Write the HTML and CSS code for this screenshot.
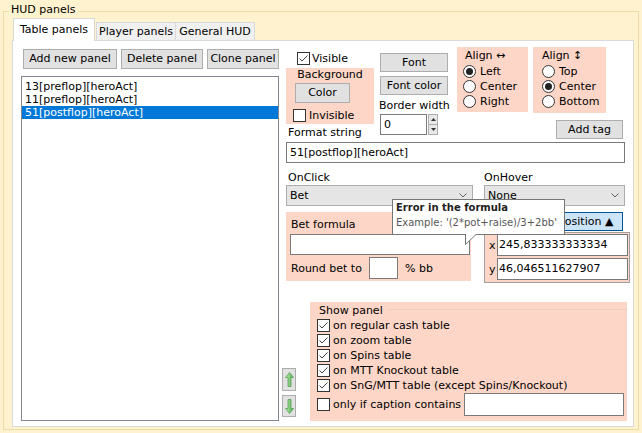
FILE: index.html
```html
<!DOCTYPE html>
<html>
<head>
<meta charset="utf-8">
<link rel="stylesheet" href="styles.css">
</head>
<body>
<div class="group">
  <div class="legend">HUD panels</div>
  <div class="tabs">
    <div class="tab active">Table panels</div>
    <div class="tab tp">Player panels</div>
    <div class="tab tg">General HUD</div>
  </div>
  <div class="page">
    <div class="left">
      <div class="btnrow">
        <div class="btn w1">Add new panel</div>
        <div class="btn w2">Delete panel</div>
        <div class="btn w3">Clone panel</div>
      </div>
      <div class="list">
        <div class="item">13[preflop][heroAct]</div>
        <div class="item">11[preflop][heroAct]</div>
        <div class="item sel">51[postflop][heroAct]</div>
      </div>
    </div>
    <div class="right">
      <div class="top">
        <div class="colA">
          <div class="chk visible"><svg class="cb" width="13" height="13" viewBox="0 0 13 13"><rect x=".5" y=".5" width="12" height="12" fill="#fff" stroke="#333"/><path d="M2.5 6.5l2.5 2.5 5.5-5.5" fill="none" stroke="#444"/></svg><span>Visible</span></div>
          <div class="bgbox pink">
            <div class="bgtitle">Background</div>
            <div class="btn colorbtn">Color</div>
            <div class="chk invis"><svg class="cb" width="13" height="13" viewBox="0 0 13 13"><rect x=".5" y=".5" width="12" height="12" fill="#fff" stroke="#333"/></svg><span>Invisible</span></div>
          </div>
          <div class="fmtlabel">Format string</div>
        </div>
        <div class="colB">
          <div class="btn fontbtn">Font</div>
          <div class="btn fontcolor">Font color</div>
          <div class="bwlabel">Border width</div>
          <div class="spin">
            <div class="inp spininp">0</div>
            <div class="spinbtns">
              <div class="sb"><svg width="5" height="3" viewBox="0 0 5 3"><path d="M0 3h5L2.5 0z" fill="#333"/></svg></div>
              <div class="sb"><svg width="5" height="3" viewBox="0 0 5 3"><path d="M0 0h5L2.5 3z" fill="#333"/></svg></div>
            </div>
          </div>
        </div>
        <div class="align1 pink">
          <div class="atitle">Align ↔</div>
          <div class="radios">
            <div class="radio"><svg width="13" height="13" viewBox="0 0 13 13"><circle cx="6.5" cy="6.5" r="6" fill="#fff" stroke="#333"/><circle cx="6.5" cy="6.5" r="3.5" fill="#222"/></svg><span>Left</span></div>
            <div class="radio"><svg width="13" height="13" viewBox="0 0 13 13"><circle cx="6.5" cy="6.5" r="6" fill="#fff" stroke="#333"/></svg><span>Center</span></div>
            <div class="radio"><svg width="13" height="13" viewBox="0 0 13 13"><circle cx="6.5" cy="6.5" r="6" fill="#fff" stroke="#333"/></svg><span>Right</span></div>
          </div>
        </div>
        <div class="colD">
          <div class="align2 pink">
            <div class="atitle">Align ↕</div>
            <div class="radios">
              <div class="radio"><svg width="13" height="13" viewBox="0 0 13 13"><circle cx="6.5" cy="6.5" r="6" fill="#fff" stroke="#333"/></svg><span>Top</span></div>
              <div class="radio"><svg width="13" height="13" viewBox="0 0 13 13"><circle cx="6.5" cy="6.5" r="6" fill="#fff" stroke="#333"/><circle cx="6.5" cy="6.5" r="3.5" fill="#222"/></svg><span>Center</span></div>
              <div class="radio"><svg width="13" height="13" viewBox="0 0 13 13"><circle cx="6.5" cy="6.5" r="6" fill="#fff" stroke="#333"/></svg><span>Bottom</span></div>
            </div>
          </div>
          <div class="btn addtag">Add tag</div>
        </div>
      </div>
      <div class="inp fmtinput">51[postflop][heroAct]</div>
      <div class="labels"><span class="lab1">OnClick</span><span>OnHover</span></div>
      <div class="combos">
        <div class="combo bet"><span>Bet</span><svg width="8" height="5" viewBox="0 0 8 5"><path d="M.5 .5l3.5 3.5 3.5-3.5" fill="none" stroke="#606060"/></svg></div>
        <div class="combo none"><span>None</span><svg width="8" height="5" viewBox="0 0 8 5"><path d="M.5 .5l3.5 3.5 3.5-3.5" fill="none" stroke="#606060"/></svg></div>
      </div>
      <div class="frow">
        <div class="betbox pink">
          <div class="blabel">Bet formula</div>
          <div class="inp betinput"></div>
          <div class="round">
            <span class="rlabel">Round bet to</span>
            <div class="inp rinput"></div>
            <span class="pbb">% bb</span>
          </div>
        </div>
        <div class="pos">
          <div class="posbtn">Position ▲</div>
          <div class="xy pink">
            <div class="xyrow"><span class="xl">x</span><div class="inp xyinp">245,833333333334</div></div>
            <div class="xyrow"><span class="xl">y</span><div class="inp xyinp">46,046511627907</div></div>
          </div>
        </div>
      </div>
      <div class="bottom">
        <div class="arrows">
          <div class="btn abtn up"><svg width="9" height="15" viewBox="0 0 9 15"><defs><linearGradient id="g1" x1="0" y1="0" x2="1" y2="0"><stop offset="0" stop-color="#c6f2b8"/><stop offset="1" stop-color="#43a843"/></linearGradient></defs><path d="M4.5 .5L8.5 5.5H6V14.5H3V5.5H.5Z" fill="url(#g1)" stroke="#5a9e5a" stroke-width=".8"/></svg></div>
          <div class="btn abtn dn"><svg width="9" height="15" viewBox="0 0 9 15"><defs><linearGradient id="g2" x1="0" y1="0" x2="1" y2="0"><stop offset="0" stop-color="#c6f2b8"/><stop offset="1" stop-color="#43a843"/></linearGradient></defs><path d="M4.5 14.5L8.5 9.5H6V.5H3V9.5H.5Z" fill="url(#g2)" stroke="#5a9e5a" stroke-width=".8"/></svg></div>
        </div>
        <div class="show pink">
          <div class="stitle"><span>Show panel</span></div>
          <div class="chk srow"><svg class="cb" width="13" height="13" viewBox="0 0 13 13"><rect x=".5" y=".5" width="12" height="12" fill="#fff" stroke="#333"/><path d="M2.5 6.5l2.5 2.5 5.5-5.5" fill="none" stroke="#444"/></svg><span>on regular cash table</span></div>
          <div class="chk srow"><svg class="cb" width="13" height="13" viewBox="0 0 13 13"><rect x=".5" y=".5" width="12" height="12" fill="#fff" stroke="#333"/><path d="M2.5 6.5l2.5 2.5 5.5-5.5" fill="none" stroke="#444"/></svg><span>on zoom table</span></div>
          <div class="chk srow"><svg class="cb" width="13" height="13" viewBox="0 0 13 13"><rect x=".5" y=".5" width="12" height="12" fill="#fff" stroke="#333"/><path d="M2.5 6.5l2.5 2.5 5.5-5.5" fill="none" stroke="#444"/></svg><span>on Spins table</span></div>
          <div class="chk srow"><svg class="cb" width="13" height="13" viewBox="0 0 13 13"><rect x=".5" y=".5" width="12" height="12" fill="#fff" stroke="#333"/><path d="M2.5 6.5l2.5 2.5 5.5-5.5" fill="none" stroke="#444"/></svg><span>on MTT Knockout table</span></div>
          <div class="chk srow"><svg class="cb" width="13" height="13" viewBox="0 0 13 13"><rect x=".5" y=".5" width="12" height="12" fill="#fff" stroke="#333"/><path d="M2.5 6.5l2.5 2.5 5.5-5.5" fill="none" stroke="#444"/></svg><span>on SnG/MTT table (except Spins/Knockout)</span></div>
          <div class="chk srow last"><svg class="cb" width="13" height="13" viewBox="0 0 13 13"><rect x=".5" y=".5" width="12" height="12" fill="#fff" stroke="#333"/></svg><span>only if caption contains</span><div class="inp capinp"></div></div>
        </div>
      </div>
    </div>
    <div class="tip">
      <div class="tipt">Error in the formula</div>
      <div>Example: '(2*pot+raise)/3+2bb'</div>
      <svg class="tail" width="13" height="12" viewBox="0 0 13 12"><path d="M.5 0V10.5L11.5 0Z" fill="#fff"/><path d="M.5 0V10.5L11.5 0" fill="none" stroke="#767676"/></svg>
    </div>
  </div>
</div>
</body>
</html>
```

FILE: styles.css
```css
* { box-sizing: border-box; }
html, body { margin: 0; }
body {
  background: #fef2cf;
  font-family: "DejaVu Sans", sans-serif;
  font-size: 11px;
  color: #000;
  width: 642px;
  height: 433px;
  overflow: hidden;
  padding: 11px 0 0 3px;
}
.group {
  position: relative;
  width: 636px;
  height: 419px;
  border: 1px solid #ecdba8;
  padding: 6px 4px 2px 8px;
}
.legend {
  position: absolute;
  left: 5px;
  top: -9px;
  padding: 0 2px;
  background: #fef2cf;
  line-height: 14px;
}
.tabs { display: flex; height: 22px; align-items: flex-end; }
.tab {
  height: 18px;
  border: 1px solid #d9d9d9;
  border-bottom: none;
  background: #f0f0f0;
  text-align: center;
  line-height: 17px;
  white-space: nowrap;
}
.tab.active {
  width: 82px;
  height: 23px;
  margin-left: 1px;
  margin-bottom: -1px;
  background: #fff;
  line-height: 22px;
  position: relative;
  z-index: 1;
}
.tab.tp { width: 80px; margin-left: 1px; }
.tab.tg { width: 79px; border-left: none; }
.page {
  position: relative;
  width: 622px;
  height: 387px;
  border: 1px solid #d9d9d9;
  background: #fff;
  display: flex;
}
.left { margin-left: 8px; padding-top: 8px; width: 258px; }
.btnrow { display: flex; gap: 4px; padding-left: 2px; }
.btn {
  height: 20px;
  border: 1px solid #adadad;
  background: #e1e1e1;
  line-height: 18px;
  text-align: center;
  white-space: nowrap;
}
.w1 { width: 94px; }
.w2 { width: 82px; }
.w3 { width: 72px; }
.list {
  margin-top: 7px;
  height: 345px;
  border: 1px solid #828790;
  padding-top: 3px;
}
.item { line-height: 13px; padding-left: 3px; }
.item.sel { background: #0078d7; color: #fff; }

.right { margin-left: 3px; width: 351px; }
.pink { background: #fdd6c7; }
.top { display: flex; margin-top: 6px; height: 95px; padding-left: 4px; }
.chk { display: flex; align-items: center; gap: 3px; height: 13px; line-height: 13px; white-space: nowrap; }
.cb { flex: none; }
.colA { width: 88px; }
.visible { margin: 5px 0 0 11px; gap: 2px; }
.bgbox { margin-top: 3px; height: 56px; }
.bgtitle { text-align: center; line-height: 13px; }
.colorbtn { margin: 2px 0 0 9px; width: 55px; height: 20px; }
.invis { margin: 6px 0 0 7px; }
.fmtlabel { margin: 2px 0 0 2px; line-height: 13px; }
.colB { margin-left: 6px; width: 68px; }
.fontbtn { margin-top: 6px; height: 19px; line-height: 17px; }
.fontcolor { margin-top: 4px; height: 19px; line-height: 17px; }
.bwlabel { margin: 4px 0 0 -1px; line-height: 13px; white-space: nowrap; }
.spin { margin-top: 2px; display: flex; }
.inp {
  border: 1px solid #7a7a7a;
  background: #fff;
  white-space: nowrap;
}
.spininp { width: 47px; height: 21px; padding-left: 3px; line-height: 19px; }
.spinbtns { margin-left: 1px; width: 10px; height: 21px; display: flex; flex-direction: column; }
.sb {
  flex: 1;
  border: 1px solid #adadad;
  background: #e8e8e8;
  display: flex;
  align-items: center;
  justify-content: center;
}
.sb + .sb { border-top: none; }
.align1 { margin-left: 9px; width: 71px; height: 65px; padding-top: 2px; }
.align1 .atitle { padding-left: 8px; }
.atitle { line-height: 13px; white-space: nowrap; }
.radios { margin-top: 2px; }
.align1 .radios { padding-left: 6px; }
.radio { display: flex; align-items: center; gap: 4px; height: 15px; white-space: nowrap; }
.radio svg { flex: none; }
.colD { margin-left: 5px; }
.align2 { width: 73px; height: 66px; padding-top: 2px; }
.align2 .atitle { padding-left: 9px; }
.align2 .radios { padding-left: 9px; margin-top: 2px; }
.addtag { margin: 7px 0 0 23px; width: 67px; height: 19px; line-height: 17px; }

.fmtinput { margin-left: 4px; width: 339px; height: 21px; padding-left: 3px; line-height: 19px; }
.labels { display: flex; height: 22px; padding: 8px 0 0 6px; line-height: 13px; }
.lab1 { width: 196px; }
.combos { display: flex; padding-left: 4px; gap: 11px; }
.combo {
  height: 21px;
  border: 1px solid #adadad;
  background: #e5e5e5;
  display: flex;
  align-items: center;
  justify-content: space-between;
  padding: 0 5px 0 3px;
}
.bet { width: 187px; }
.none { width: 141px; }
.frow { display: flex; margin-top: 6px; padding-left: 4px; }
.betbox { width: 185px; height: 69px; padding: 6px 0 0 4px; }
.blabel { padding-left: 1px; line-height: 13px; }
.betinput { margin-top: 3px; width: 180px; height: 21px; }
.round { display: flex; align-items: center; margin-top: 2px; height: 22px; }
.rlabel { width: 79px; padding-left: 1px; white-space: nowrap; }
.rinput { width: 29px; height: 22px; }
.pbb { margin-left: 7px; }
.pos { margin-left: 13px; width: 146px; height: 70px; display: flex; flex-direction: column; }
.posbtn {
  align-self: flex-end;
  margin-right: 7px;
  width: 74px;
  height: 19px;
  background: #cce4f7;
  border: 1px solid #005499;
  text-align: center;
  line-height: 17px;
  white-space: nowrap;
}
.xy { margin-top: 1px; flex: 1; border: 1px solid #a0a0a0; padding: 1px 0 0 4px; }
.xyrow { display: flex; align-items: center; height: 22px; margin-bottom: 2px; }
.xl { width: 8px; }
.xyinp { width: 131px; height: 22px; padding-left: 1px; line-height: 20px; }
.bottom { display: flex; margin-top: 20px; }
.arrows { width: 14px; display: flex; flex-direction: column; gap: 4px; align-self: flex-end; margin-bottom: 4px; }
.abtn { display: flex; align-items: center; justify-content: center; }
.abtn.up { height: 23px; }
.abtn.dn { height: 22px; }
.show { margin-left: 14px; width: 317px; height: 119px; padding: 2px 0 0 7px; }
.stitle { display: flex; align-items: center; line-height: 13px; padding-left: 2px; }
.stitle::after { content: ""; flex: 1; border-top: 1px solid #ead0c4; margin-left: 4px; margin-top: -3px; }
.srow { height: 15px; }
.stitle + .srow { margin-top: 1px; }
.srow.last { height: 23px; }
.capinp { margin-left: auto; margin-right: 3px; width: 162px; height: 23px; }

.tip {
  position: absolute;
  left: 379px;
  top: 158px;
  width: 173px;
  height: 36px;
  background: #fff;
  border: 1px solid #767676;
  padding-left: 3px;
  font-size: 10px;
  line-height: 15px;
  color: #575757;
  white-space: nowrap;
}
.tipt { font-weight: bold; color: #222; }
.tail { position: absolute; left: 72px; top: 34px; }
```
